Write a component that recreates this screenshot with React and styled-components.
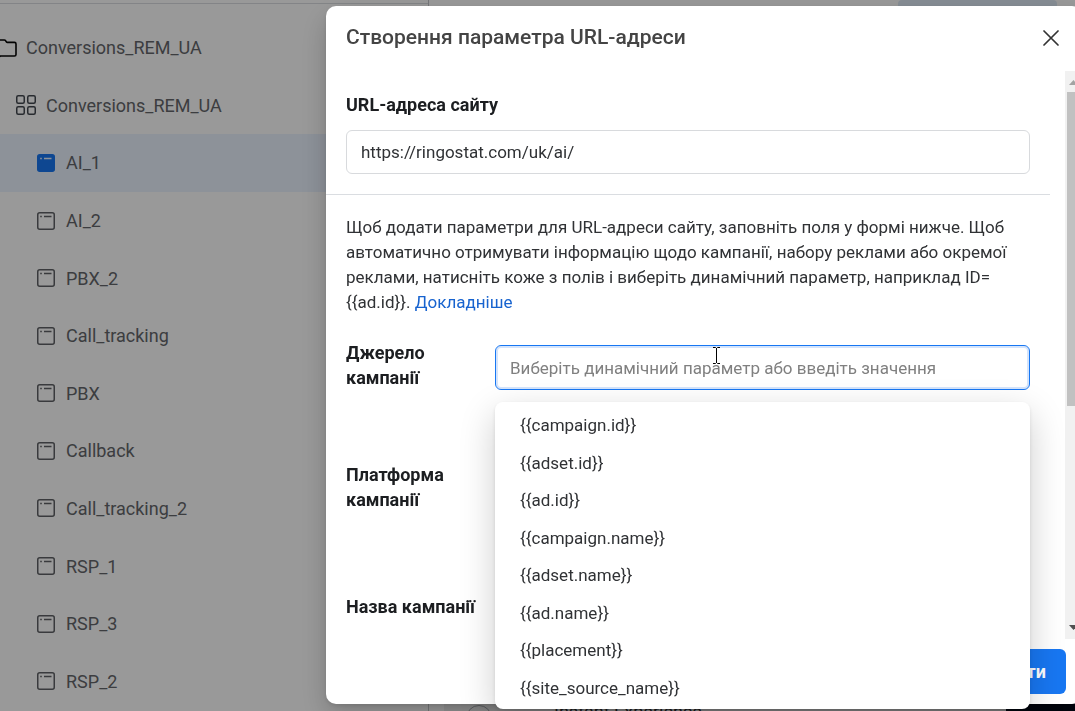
import React from "react";
import styled, { createGlobalStyle } from "styled-components";

const ADS = [
  "AI_1",
  "AI_2",
  "PBX_2",
  "Call_tracking",
  "PBX",
  "Callback",
  "Call_tracking_2",
  "RSP_1",
  "RSP_3",
  "RSP_2",
];

const PARAMETERS = [
  "{{campaign.id}}",
  "{{adset.id}}",
  "{{ad.id}}",
  "{{campaign.name}}",
  "{{adset.name}}",
  "{{ad.name}}",
  "{{placement}}",
  "{{site_source_name}}",
];

const FolderIcon = () => (
  <Icon width="20" height="20" viewBox="0 0 20 20">
    <path
      d="M1 3.5a1.5 1.5 0 0 1 1.5-1.5h4.8c.5 0 .9.2 1.2.6l1 1.4c.2.3.5.4.9.4h7.1a1.5 1.5 0 0 1 1.5 1.5v10.6a1.5 1.5 0 0 1-1.5 1.5h-14A1.5 1.5 0 0 1 1 16.500z"
      stroke="#050505"
      strokeWidth="1.6"
    />
  </Icon>
);

const GridIcon = () => (
  <Icon width="20" height="20" viewBox="0 0 20 20">
    {[0.75, 11.75].map((y) =>
      [0.75, 11.75].map((x) => (
        <rect
          key={`${x}-${y}`}
          x={x}
          y={y}
          width="7.5"
          height="7.5"
          rx="1.5"
          stroke="#444950"
          strokeWidth="1.5"
        />
      ))
    )}
  </Icon>
);

const AdIcon = ({ selected }) => (
  <Icon width="18" height="18" viewBox="0 0 18 18">
    <rect
      x="0.75"
      y="0.75"
      width="16.5"
      height="16.5"
      rx="2"
      fill={selected ? "#1877f2" : "none"}
      stroke={selected ? "#1877f2" : "#606266"}
      strokeWidth="1.5"
    />
    <path
      d="M3.200 4.500h1.600M7 4.500h7.500"
      stroke={selected ? "#ebf3ff" : "#606266"}
      strokeWidth="1.3"
    />
  </Icon>
);

const Sidebar = () => (
  <SidebarWrapper>
    <Tree>
      <TreeItem $level={0}>
        <FolderIcon />
        Conversions_REM_UA
      </TreeItem>
      <TreeItem $level={1}>
        <GridIcon />
        Conversions_REM_UA
      </TreeItem>
      {ADS.map((ad, index) => (
        <TreeItem key={ad} $level={2} $selected={index === 0}>
          <AdIcon selected={index === 0} />
          {ad}
        </TreeItem>
      ))}
    </Tree>
  </SidebarWrapper>
);

const Editor = () => (
  <EditorWrapper>
    <TopAction type="button" aria-label="Переглянути" />
    <EditorBottom>
      <Option>
        <input type="radio" name="destination" />
        Instant Experience
      </Option>
      <PreviewImage />
    </EditorBottom>
  </EditorWrapper>
);

const Scrollbar = () => (
  <ScrollTrack aria-hidden="true">
    <svg width="17" height="21" viewBox="0 0 17 21">
      <path d="M4 14l4.500-5 4.500 5z" fill="#a3a3a3" />
    </svg>
    <ScrollThumb />
    <ScrollEnd width="17" height="21" viewBox="0 0 17 21">
      <path d="M4 7l4.500 5 4.500-5z" fill="#505050" />
    </ScrollEnd>
  </ScrollTrack>
);

const App = () => {
  return (
    <>
      <GlobalStyle />
      <Page>
        <Sidebar />
        <Editor />
      </Page>

      <Overlay>
        <Modal role="dialog" aria-labelledby="dialog-title">
          <Header>
            <Title id="dialog-title">Створення параметра URL-адреси</Title>
            <CloseButton type="button" aria-label="Закрити">
              <svg width="16" height="16" viewBox="0 0 16 16">
                <path
                  d="M1 1l14 14M15 1L1 15"
                  stroke="#333"
                  strokeWidth="1.7"
                  strokeLinecap="round"
                />
              </svg>
            </CloseButton>
          </Header>

          <Body>
            <Content>
              <UrlSection>
                <Label htmlFor="url">URL-адреса сайту</Label>
                <Input id="url" defaultValue="https://ringostat.com/uk/ai/" />
              </UrlSection>

              <ParametersSection>
                <Description>
                  Щоб додати параметри для URL-адреси сайту, заповніть поля у
                  формі нижче. Щоб автоматично отримувати інформацію щодо
                  кампанії, набору реклами або окремої реклами, натисніть коже з
                  полів і виберіть динамічний параметр, наприклад ID=
                  <wbr />
                  {"{{ad.id}}. "}
                  <a href="#more">Докладніше</a>
                </Description>

                <Row>
                  <Label htmlFor="source">Джерело кампанії</Label>
                  <Combobox>
                    <Input
                      id="source"
                      $active
                      placeholder="Виберіть динамічний параметр або введіть значення"
                    />
                    <TextCursor width="9" height="17" viewBox="0 0 9 17">
                      <path
                        d="M1 .5h2.500l1 1 1-1H8M4.500 1v15M1 16.500h2.500l1-1 1 1H8"
                        stroke="#000"
                        fill="none"
                      />
                    </TextCursor>
                    <Dropdown role="listbox">
                      {PARAMETERS.map((parameter) => (
                        <DropdownItem
                          key={parameter}
                          role="option"
                          aria-selected="false"
                        >
                          {parameter}
                        </DropdownItem>
                      ))}
                    </Dropdown>
                  </Combobox>
                </Row>

                <Row>
                  <Label htmlFor="platform">Платформа кампанії</Label>
                  <Input id="platform" />
                </Row>

                <Row>
                  <Label htmlFor="name">Назва кампанії</Label>
                  <Input id="name" />
                </Row>
              </ParametersSection>
            </Content>
            <Scrollbar />
          </Body>

          <Footer>
            <ApplyButton type="button">Застосувати</ApplyButton>
          </Footer>
        </Modal>
      </Overlay>
    </>
  );
};

const GlobalStyle = createGlobalStyle`
  *, *::before, *::after {
    box-sizing: border-box;
  }

  body {
    margin: 0;
    overflow: hidden;
    font-family: Roboto, "Liberation Sans", sans-serif;
    font-size: 18px;
    line-height: 25px;
    color: #303235;
  }

  h1, p, ul {
    margin: 0;
    padding: 0;
  }

  ul {
    list-style: none;
  }

  button, input {
    font: inherit;
    color: inherit;
  }
`;

const Page = styled.div`
  display: flex;
  height: 100vh;
  background: white;
`;

const SidebarWrapper = styled.nav`
  flex: 0 0 429px;
  padding-top: 3px;
  border-right: 1px solid #c4c6ca;
`;

const Tree = styled.ul`
  display: grid;
  grid-auto-rows: 1fr;
  min-height: 707px;
  && {
    padding-top: 15px;
  }
  border-top: 1px solid #dadde1;
`;

const TreeItem = styled.li`
  display: flex;
  align-items: center;
  gap: ${(p) => [9, 10, 11][p.$level]}px;
  padding-left: ${(p) => [0, 16, 37][p.$level]}px;
  margin-left: ${(p) => (p.$level === 0 ? -3 : 0)}px;
  background: ${(p) => (p.$selected ? "#ebf3ff" : "transparent")};
  color: #65676b;
`;

const Icon = styled.svg`
  flex: none;
  fill: none;
`;

const EditorWrapper = styled.main`
  flex: 1;
  display: flex;
  flex-direction: column;
  justify-content: space-between;
`;

const TopAction = styled.button`
  align-self: flex-end;
  width: 159px;
  height: 12px;
  margin-right: 18px;
  border: 0;
  border-radius: 4px;
  background: #dfebf7;
`;

const EditorBottom = styled.div`
  display: flex;
  justify-content: space-between;
  height: 12px;
  margin-left: 15px;
  background: #f0f0f0;
`;

const Option = styled.label`
  display: flex;
  align-items: flex-start;
  gap: 62px;
  padding-left: 22px;

  input {
    appearance: none;
    width: 26px;
    height: 26px;
    margin: 6px 0 0;
    border: 1px solid #a0a4aa;
    border-radius: 50%;
  }
`;

const PreviewImage = styled.div`
  width: 69px;
  background: #020818;
`;

const Overlay = styled.div`
  position: fixed;
  inset: 0;
  display: flex;
  padding: 6px 0 7px 326px;
  overflow: hidden;
  background: rgba(0, 0, 0, 0.4);
`;

const Modal = styled.section`
  flex: 1;
  display: flex;
  flex-direction: column;
  margin-right: -7px;
  border-radius: 10px;
  background: white;
  box-shadow: 0 12px 28px rgba(0, 0, 0, 0.2), 0 2px 4px rgba(0, 0, 0, 0.1);
  font-size: 17px;
`;

const Header = styled.header`
  display: flex;
  align-items: center;
  justify-content: space-between;
  height: 65px;
  padding: 0 20px 2px;
`;

const Title = styled.h1`
  font-size: 21px;
  line-height: 27px;
  font-weight: 500;
  color: #444;
`;

const CloseButton = styled.button`
  padding: 3px;
  border: 0;
  background: none;

  svg {
    display: block;
  }
`;

const Body = styled.div`
  flex: 1;
  display: flex;
`;

const Content = styled.div`
  flex: 1;
  padding-right: 15px;
`;

const UrlSection = styled.div`
  display: grid;
  gap: 13px;
  padding: 21px 20px 20px;
  border-bottom: 1px solid #dadde1;
`;

const ParametersSection = styled.form`
  padding: 20px 20px 0;
`;

const Label = styled.label`
  color: #1c1e21;
  font-size: 18px;
  font-weight: 700;
`;

const Input = styled.input`
  display: block;
  width: 100%;
  height: ${(p) => (p.$active ? 45 : 44)}px;
  padding: 0 14px;
  border: 1px solid ${(p) => (p.$active ? "#1877f2" : "#d8dadd")};
  border-radius: 6px;
  background: white;
  box-shadow: ${(p) => (p.$active ? "inset 0 0 0 2px #d4e4fc" : "none")};
  outline: none;

  &::placeholder {
    color: #808080;
    opacity: 1;
  }
`;

const Description = styled.p`
  margin-bottom: 25px;

  a {
    color: #1763cf;
    text-decoration: none;
  }
`;

const Row = styled.div`
  display: grid;
  grid-template-columns: 133px 1fr;
  column-gap: 16px;
  align-items: center;

  & + & {
    margin-top: 72px;
  }
`;

const Combobox = styled.div`
  position: relative;
  align-self: end;
`;

const TextCursor = styled.svg`
  position: absolute;
  top: 2px;
  left: 217px;
`;

const Dropdown = styled.ul`
  position: absolute;
  z-index: 1;
  top: calc(100% + 12px);
  left: 0;
  right: 0;
  display: grid;
  grid-auto-rows: 1fr;
  min-height: 307px;
  && {
    padding: 5px 0 2px;
  }
  border-radius: 8px;
  background: white;
  box-shadow: 0 12px 36px rgba(0, 0, 0, 0.2), 0 2px 4px rgba(0, 0, 0, 0.1);
`;

const DropdownItem = styled.li`
  display: flex;
  align-items: center;
  padding: 0 25px;
`;

const ScrollTrack = styled.div`
  flex: 0 0 17px;
  display: flex;
  flex-direction: column;
  background: #f1f1f1;
`;

const ScrollThumb = styled.div`
  height: 314px;
  margin: 0 2px;
  background: #c1c1c1;
`;

const ScrollEnd = styled.svg`
  margin-top: auto;
`;

const Footer = styled.footer`
  display: flex;
  justify-content: flex-end;
  padding: 10px 16px;
`;

const ApplyButton = styled.button`
  height: 45px;
  padding: 0 20px;
  border: 0;
  border-radius: 6px;
  background: #1877f2;
  color: white;
  font-size: 18px;
  font-weight: 700;
`;

export default App;
